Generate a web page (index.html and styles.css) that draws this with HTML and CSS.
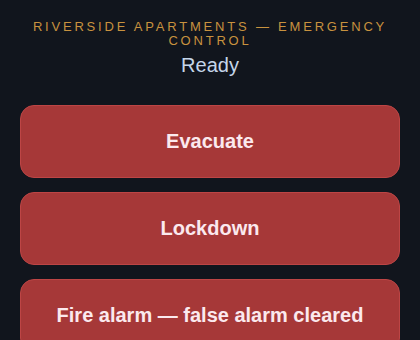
FILE: index.html
```html
<!DOCTYPE html>
<html>
<head>
<meta charset="utf-8">
<link rel="stylesheet" href="styles.css">
</head>
<body>
<main class="panel">
  <header class="head">
    <h1 class="title">Riverside Apartments — Emergency Control</h1>
    <div class="status">Ready</div>
  </header>
  <div class="actions">
    <button class="btn">Evacuate</button>
    <button class="btn">Lockdown</button>
    <button class="btn">Fire alarm — false alarm cleared</button>
  </div>
</main>
</body>
</html>
```
FILE: styles.css
```css
html, body {
  margin: 0;
  background: #11151d;
  height: 100%;
  overflow: hidden;
}
body {
  font-family: "Liberation Sans", Arial, sans-serif;
}
.panel {
  padding: 20px 20px 18px;
}
.head {
  text-align: center;
}
.title {
  margin: 0;
  font-size: 13px;
  line-height: 14px;
  font-weight: normal;
  letter-spacing: 2.8px;
  text-transform: uppercase;
  color: #c8923f;
}
.status {
  margin-top: 5px;
  font-size: 20px;
  line-height: 24px;
  color: #c5d6ea;
}
.actions {
  margin-top: 28px;
  display: flex;
  flex-direction: column;
  gap: 14px;
}
.btn {
  height: 73px;
  border: 1px solid #bd4545;
  border-radius: 14px;
  background: #a63838;
  color: #fbe9ee;
  font-family: "Liberation Sans", Arial, sans-serif;
  font-size: 20px;
  font-weight: bold;
  padding: 0;
}
```
